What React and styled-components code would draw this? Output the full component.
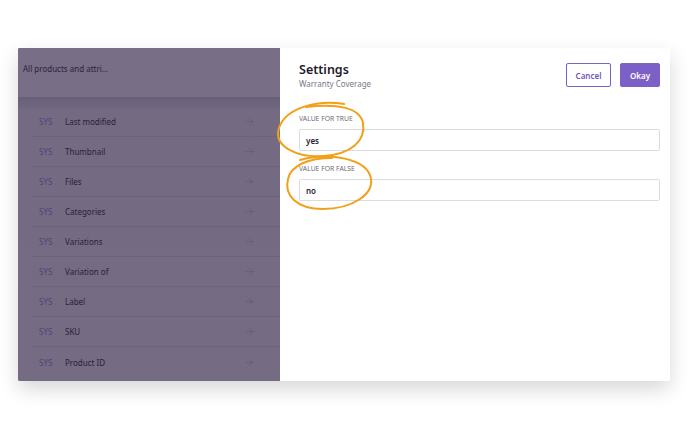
import React from "react";
import styled, { createGlobalStyle } from "styled-components";
import { ArrowRight } from "lucide-react";

const GlobalStyle = createGlobalStyle`
  html, body {
    margin: 0;
    padding: 0;
    background: #fff;
  }
  body {
    font-family: "Noto Sans", "Open Sans", sans-serif;
    color: #2b2438;
  }
`;

const Page = styled.div`
  width: 688px;
  height: 430px;
  padding: 48px 18px 0;
  box-sizing: border-box;
`;

const Card = styled.div`
  position: relative;
  display: flex;
  height: 333px;
  box-shadow: 0 8px 20px rgba(0, 0, 0, 0.16);
  border-radius: 2px;
  overflow: hidden;
`;

const Sidebar = styled.div`
  width: 262px;
  flex-shrink: 0;
  display: flex;
  flex-direction: column;
  background: #74697f;
`;

const SideHeader = styled.div`
  height: 49px;
  padding: 15px 5px 0;
  box-sizing: border-box;
  background: #786e86;
  font-size: 8px;
  color: #2c2340;
`;

const List = styled.ul`
  list-style: none;
  margin: 0;
  padding: 10px 0 0;
  flex: 1;
  background: linear-gradient(#675e78 0, #746a82 14px, #756b83 100%);
`;

const Row = styled.li`
  display: flex;
  align-items: center;
  height: 30px;
  margin-left: 14px;
  padding: 0 25px 0 7px;
  border-bottom: 1px solid rgba(40, 30, 60, 0.1);
  box-sizing: border-box;
  font-size: 8px;
  &:last-child {
    border-bottom: none;
  }
`;

const Tag = styled.span`
  width: 26px;
  color: #4d4578;
  font-size: 8px;
`;

const RowLabel = styled.span`
  flex: 1;
  color: #2a2138;
`;

const RowArrow = styled(ArrowRight)`
  color: rgba(60, 50, 80, 0.28);
`;

const Panel = styled.div`
  flex: 1;
  background: #fff;
  padding: 14px 10px 0 19px;
`;

const PanelHead = styled.div`
  display: flex;
  align-items: flex-start;
  justify-content: space-between;
  margin-bottom: 25px;
`;

const Title = styled.h2`
  margin: 0;
  font-size: 12.5px;
  line-height: 16px;
  font-weight: 600;
  color: #1f1a2b;
`;

const Subtitle = styled.div`
  font-size: 8px;
  line-height: 11px;
  color: #7b7785;
`;

const Actions = styled.div`
  display: flex;
  gap: 9px;
  padding-top: 1px;
`;

const Button = styled.button`
  height: 24px;
  padding: 0;
  width: ${(p) => (p.$primary ? "40px" : "45px")};
  border-radius: 2px;
  border: 1.5px solid #7b61c4;
  background: ${(p) => (p.$primary ? "#7c5fc7" : "#fff")};
  color: ${(p) => (p.$primary ? "#fff" : "#6f57b8")};
  font-family: inherit;
  font-size: 8px;
  font-weight: 600;
  box-sizing: border-box;
`;

const Field = styled.div`
  display: flex;
  flex-direction: column;
  margin-bottom: 13px;
`;

const Label = styled.label`
  font-size: 6.8px;
  line-height: 10px;
  text-transform: uppercase;
  color: #6f6b78;
  margin-bottom: 5px;
`;

const Input = styled.input`
  height: 22px;
  border: 1px solid #dcdbe0;
  border-radius: 2px;
  padding: 0 6px;
  font-family: inherit;
  font-size: 8px;
  font-weight: 600;
  color: #2a2336;
  box-sizing: border-box;
  outline: none;
`;

const Marks = styled.svg`
  position: absolute;
  left: -18px;
  top: -48px;
  pointer-events: none;
`;

const rows = [
  "Last modified",
  "Thumbnail",
  "Files",
  "Categories",
  "Variations",
  "Variation of",
  "Label",
  "SKU",
  "Product ID",
];

function App() {
  return (
    <Page>
      <GlobalStyle />
      <Card>
        <Sidebar>
          <SideHeader>All products and attri...</SideHeader>
          <List>
            {rows.map((r) => (
              <Row key={r}>
                <Tag>SYS</Tag>
                <RowLabel>{r}</RowLabel>
                <RowArrow size={11} strokeWidth={1.5} />
              </Row>
            ))}
          </List>
        </Sidebar>
        <Panel>
          <PanelHead>
            <div>
              <Title>Settings</Title>
              <Subtitle>Warranty Coverage</Subtitle>
            </div>
            <Actions>
              <Button>Cancel</Button>
              <Button $primary>Okay</Button>
            </Actions>
          </PanelHead>
          <Field>
            <Label>Value for true</Label>
            <Input defaultValue="yes" />
          </Field>
          <Field>
            <Label>Value for false</Label>
            <Input defaultValue="no" />
          </Field>
        </Panel>
        <Marks width="688" height="430" viewBox="0 0 688 430">
          <g fill="none" stroke="#f2a019" strokeWidth="2" strokeLinecap="round">
            <path d="M344 104 C318 100 286 107 279 128 C273 147 298 158 324 156 C351 154 366 141 363 123 C360 108 338 103 306 107" />
            <path d="M300 160 C322 153 362 156 370 175 C377 195 350 209 323 209 C296 209 284 195 288 179 C291 165 309 158 332 158" />
          </g>
        </Marks>
      </Card>
    </Page>
  );
}

export default App;
